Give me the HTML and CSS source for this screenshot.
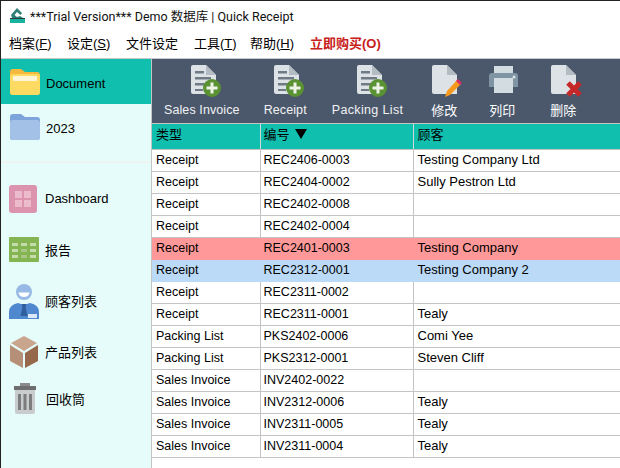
FILE: index.html
```html
<!DOCTYPE html>
<html lang="zh">
<head>
<meta charset="utf-8">
<title>Quick Receipt</title>
<link rel="stylesheet" href="styles.css">
</head>
<body>
<svg class="defs" width="0" height="0">
  <defs>
    <symbol id="doc-add" viewBox="0 0 40 34">
      <path d="M8 3a2 2 0 0 1 2-2h13l10 10v19H10a2 2 0 0 1-2-2z" fill="#dde2e6"/>
      <path d="M23 1l10 10H23z" fill="#b4bcc3"/>
      <path d="M12 7h9v2.500h-9zM12 13h16v2.500H12zM12 19h12v2.500H12zM12 25h8v2h-8z" fill="#6f7a85"/>
      <circle cx="29" cy="24" r="9" fill="#5a9132"/>
      <path d="M27.500 18.500h3v4h4v3h-4v4h-3v-4h-4v-3h4z" fill="#eef3ea"/>
    </symbol>
  </defs>
</svg>
<div class="app">
  <header class="titlebar">
    <svg class="logo" viewBox="0 0 17 17" width="17" height="17">
      <path d="M8 1l5 5-1.500 2L8 5 5.500 8 8 10l3-1 3 2H3l-1-3z" fill="#2f7f78"/>
      <path d="M1 11h15v1H1z" fill="#333a3a"/>
      <path d="M1 12h15v4H1z" fill="#17b3a0"/>
    </svg>
    <span>***Trial Version*** Demo 数据库 | Quick Receipt</span>
  </header>
  <nav class="menubar">
    <span>档案(<u>F</u>)</span>
    <span>设定(<u>S</u>)</span>
    <span>文件设定</span>
    <span>工具(<u>T</u>)</span>
    <span>帮助(<u>H</u>)</span>
    <span class="buy">立即购买(O)</span>
  </nav>
  <div class="body">
    <aside class="sidebar">
      <div class="folder active">
        <svg viewBox="0 0 30 26" width="30" height="26"><path d="M0 3a3 3 0 0 1 3-3h8l4 3h12a3 3 0 0 1 3 3v17a3 3 0 0 1-3 3H3a3 3 0 0 1-3-3z" fill="#f5b93f"/><rect x="0" y="5" width="30" height="21" rx="3" fill="#fddb63"/><rect x="3" y="7" width="24" height="5" rx="1" fill="#fff6d8"/></svg>
        <span>Document</span>
      </div>
      <div class="folder">
        <svg viewBox="0 0 30 26" width="30" height="26"><path d="M0 3a3 3 0 0 1 3-3h8l4 3h12a3 3 0 0 1 3 3v17a3 3 0 0 1-3 3H3a3 3 0 0 1-3-3z" fill="#7da5db"/><rect x="0" y="6" width="30" height="20" rx="3" fill="#a3c0e6"/></svg>
        <span>2023</span>
      </div>
      <div class="sep"></div>
      <div class="nav dash">
        <svg viewBox="0 0 28 28" width="28" height="28"><rect width="28" height="28" rx="3" fill="#dc93ad"/><path d="M6 6h7v7H6zM15 6h7v7h-7zM6 15h7v7H6zM15 15h7v7h-7z" fill="#ecbccd"/></svg>
        <span>Dashboard</span>
      </div>
      <div class="nav">
        <svg viewBox="0 0 30 26" width="30" height="26"><rect width="30" height="25" rx="1" fill="#84b552"/><path d="M3 6h6v3H3zM12 6h6v3h-6zM21 6h6v3h-6zM3 12h6v3H3zM21 12h6v3h-6zM3 18h6v3H3zM21 18h6v3h-6z" fill="#c4dca9"/><path d="M12 12h6v3h-6zM12 18h6v3h-6z" fill="#a5c983"/></svg>
        <span>报告</span>
      </div>
      <div class="nav">
        <svg viewBox="0 0 30 36" width="30" height="36"><circle cx="15" cy="9" r="8" fill="#97b9e6"/><path d="M9.500 9.500h11a5.500 4.500 0 0 1-11 0z" fill="#fff"/><path d="M0 36v-7q0-7 9-9l6 2 6-2q9 2 9 9v7z" fill="#4f88cf"/><path d="M12.500 21h5l-1 3 2 9h-7l2-9z" fill="#2f5f9f"/><path d="M19 31h9v4h-9z" fill="#dbe8f7"/></svg>
        <span>顾客列表</span>
      </div>
      <div class="nav">
        <svg viewBox="0 0 30 32" width="30" height="32"><path d="M15 0l13 7-13 8L2 7z" fill="#c9a58e"/><path d="M1 9l13 8v15L1 25z" fill="#b58f77"/><path d="M29 9l-13 8v15l13-7z" fill="#95684b"/></svg>
        <span>产品列表</span>
      </div>
      <div class="nav trash">
        <svg viewBox="0 0 22 31" width="22" height="31"><path d="M6 0h10v3H6z" fill="#8a8a8a"/><path d="M1 7h20v22a2 2 0 0 1-2 2H3a2 2 0 0 1-2-2z" fill="#c9cccc"/><path d="M0 3h22v4H0z" fill="#6e6e6e"/><path d="M4 11h3v16H4zM9.500 11h3v16h-3zM15 11h3v16h-3z" fill="#7d7d7d"/></svg>
        <span>回收筒</span>
      </div>
    </aside>
    <main class="content">
      <div class="toolbar">
        <div class="tool"><svg width="40" height="34"><use href="#doc-add"/></svg><span>Sales Invoice</span></div>
        <div class="tool"><svg width="40" height="34"><use href="#doc-add"/></svg><span>Receipt</span></div>
        <div class="tool wide"><svg width="40" height="34"><use href="#doc-add"/></svg><span>Packing List</span></div>
        <div class="tool cjk">
          <svg viewBox="1 0 40 34" width="40" height="34"><path d="M8 3a2 2 0 0 1 2-2h13l10 10v19H10a2 2 0 0 1-2-2z" fill="#dde2e6"/><path d="M23 1l10 10H23z" fill="#b4bcc3"/><path d="M21 33l2-6 10-11 4 4-11 11z" fill="#f59a1c"/><path d="M32 17l2-2 4 4-2 2z" fill="#d62a69"/></svg>
          <span>修改</span>
        </div>
        <div class="tool cjk">
          <svg viewBox="0 0 40 34" width="40" height="34"><path d="M11 2h19v8H11z" fill="#d3dce0"/><path d="M6 12a3 3 0 0 1 3-3h23a3 3 0 0 1 3 3v11H6z" fill="#7f95a3"/><circle cx="31" cy="13" r="1.500" fill="#dbe3e6"/><path d="M11 14h19v15H11z" fill="#d3dce0"/></svg>
          <span>列印</span>
        </div>
        <div class="tool cjk last">
          <svg viewBox="0 0 40 34" width="40" height="34"><path d="M7 3a2 2 0 0 1 2-2h13l10 10v19H9a2 2 0 0 1-2-2z" fill="#dde2e6"/><path d="M22 1l10 10H22z" fill="#b4bcc3"/><path d="M24 19l12 12M36 19L24 31" stroke="#c62828" stroke-width="5" fill="none"/></svg>
          <span>删除</span>
        </div>
      </div>
      <table class="grid">
        <colgroup><col class="c1"><col class="c2"><col></colgroup>
        <thead><tr><th>类型</th><th>编号 <i class="sort"></i></th><th>顾客</th></tr></thead>
        <tbody>
          <tr><td>Receipt</td><td>REC2406-0003</td><td>Testing Company Ltd</td></tr>
          <tr><td>Receipt</td><td>REC2404-0002</td><td>Sully Pestron Ltd</td></tr>
          <tr><td>Receipt</td><td>REC2402-0008</td><td></td></tr>
          <tr><td>Receipt</td><td>REC2402-0004</td><td></td></tr>
          <tr class="pink"><td>Receipt</td><td>REC2401-0003</td><td>Testing Company</td></tr>
          <tr class="blue"><td>Receipt</td><td>REC2312-0001</td><td>Testing Company 2</td></tr>
          <tr><td>Receipt</td><td>REC2311-0002</td><td></td></tr>
          <tr><td>Receipt</td><td>REC2311-0001</td><td>Tealy</td></tr>
          <tr><td>Packing List</td><td>PKS2402-0006</td><td>Comi Yee</td></tr>
          <tr><td>Packing List</td><td>PKS2312-0001</td><td>Steven Cliff</td></tr>
          <tr><td>Sales Invoice</td><td>INV2402-0022</td><td></td></tr>
          <tr><td>Sales Invoice</td><td>INV2312-0006</td><td>Tealy</td></tr>
          <tr><td>Sales Invoice</td><td>INV2311-0005</td><td>Tealy</td></tr>
          <tr><td>Sales Invoice</td><td>INV2311-0004</td><td>Tealy</td></tr>
        </tbody>
      </table>
    </main>
  </div>
</div>
</body>
</html>
```
FILE: styles.css
```css
* { box-sizing: border-box; }
html, body { margin: 0; height: 100%; overflow: hidden; background: #fff; }
body { font: 12.5px "Liberation Sans", "Noto Sans CJK SC", sans-serif; color: #000; }
.defs { position: absolute; }
.app { display: flex; flex-direction: column; height: 468px; border-top: 1px solid #222; border-left: 1px solid #222; }

.titlebar { display: flex; align-items: center; gap: 4px; height: 29px; padding-left: 8px; font: 12.5px Roboto, "Noto Sans CJK SC", sans-serif; color: #111; }
.menubar { display: flex; align-items: center; height: 29px; padding: 0 0 3px 8px; font-size: 13px; border-bottom: 1px solid #c8c8c8; }
.menubar span:nth-child(1) { width: 58px; }
.menubar span:nth-child(2) { width: 59px; }
.menubar span:nth-child(3) { width: 68px; }
.menubar span:nth-child(4) { width: 56px; }
.menubar span:nth-child(5) { width: 60px; }
.menubar .buy { color: #c8201a; font-weight: bold; }

.body { flex: 1; display: flex; min-height: 0; }
.sidebar { width: 151px; flex: none; background: #e6fcfa; border-right: 1px solid #c4c4c4; font-size: 13px; }
.folder { display: flex; align-items: center; gap: 6px; height: 45px; padding-left: 9px; }
.folder svg { flex: none; }
.folder span { padding-top: 4px; }
.folder.active { background: #10bfad; }
.sep { height: 2px; margin-top: 12px; background: #f0f2f1; }
.nav { display: flex; align-items: center; height: 51px; padding-left: 8px; }
.nav svg { flex: none; margin-right: 6px; }
.sep + .nav { margin-top: 10px; }
.nav.dash svg { margin-right: 8px; }
.nav.trash { margin-top: -4px; padding-left: 13px; }
.nav.trash svg { margin-right: 10px; }

.content { flex: 1; min-width: 0; }
.toolbar { display: flex; align-items: flex-start; gap: 24px; height: 65px; padding: 5px 0 0 12px; background: #4b586c; color: #f2f2f2; border-bottom: 1px solid #c4c4c4; }
.tool { display: flex; flex-direction: column; align-items: center; }
.tool svg { display: block; margin: 0 0 4px 2px; }
.tool span { white-space: nowrap; line-height: 17px; letter-spacing: .1px; }
.tool.wide { margin-left: 1px; }
.tool.wide span { letter-spacing: .35px; }
.tool.cjk { width: 34px; font-size: 13px; color: #fff; }
.tool.last { margin-left: 3px; }

.grid { width: 100%; table-layout: fixed; border-collapse: collapse; }
.c1 { width: 108px; }
.c2 { width: 153px; }
.grid th, .grid td { height: 22px; padding: 0 0 0 3px; line-height: 18px; text-align: left; font-weight: normal; border-right: 1px solid #c4c4c4; border-bottom: 1px solid #c4c4c4; white-space: nowrap; overflow: hidden; }
.grid td:first-child, .grid th:first-child { padding-left: 4px; }
.grid td:last-child, .grid th:last-child { font-size: 13px; padding-left: 4px; }
.grid th { height: 25px; padding-bottom: 3px; background: #10bfad; font-size: 13px; border-right-color: #d0d8d8; }
.grid th:last-child, .grid td:last-child { border-right: 0; }
.sort { display: inline-block; margin-left: 2px; border: 6px solid transparent; border-top: 10px solid #000; border-bottom: 0; }
.pink td { background: #ff9999; border-color: #ff9999; }
.blue td { background: #bbdaf8; border-color: #bbdaf8; }
```
